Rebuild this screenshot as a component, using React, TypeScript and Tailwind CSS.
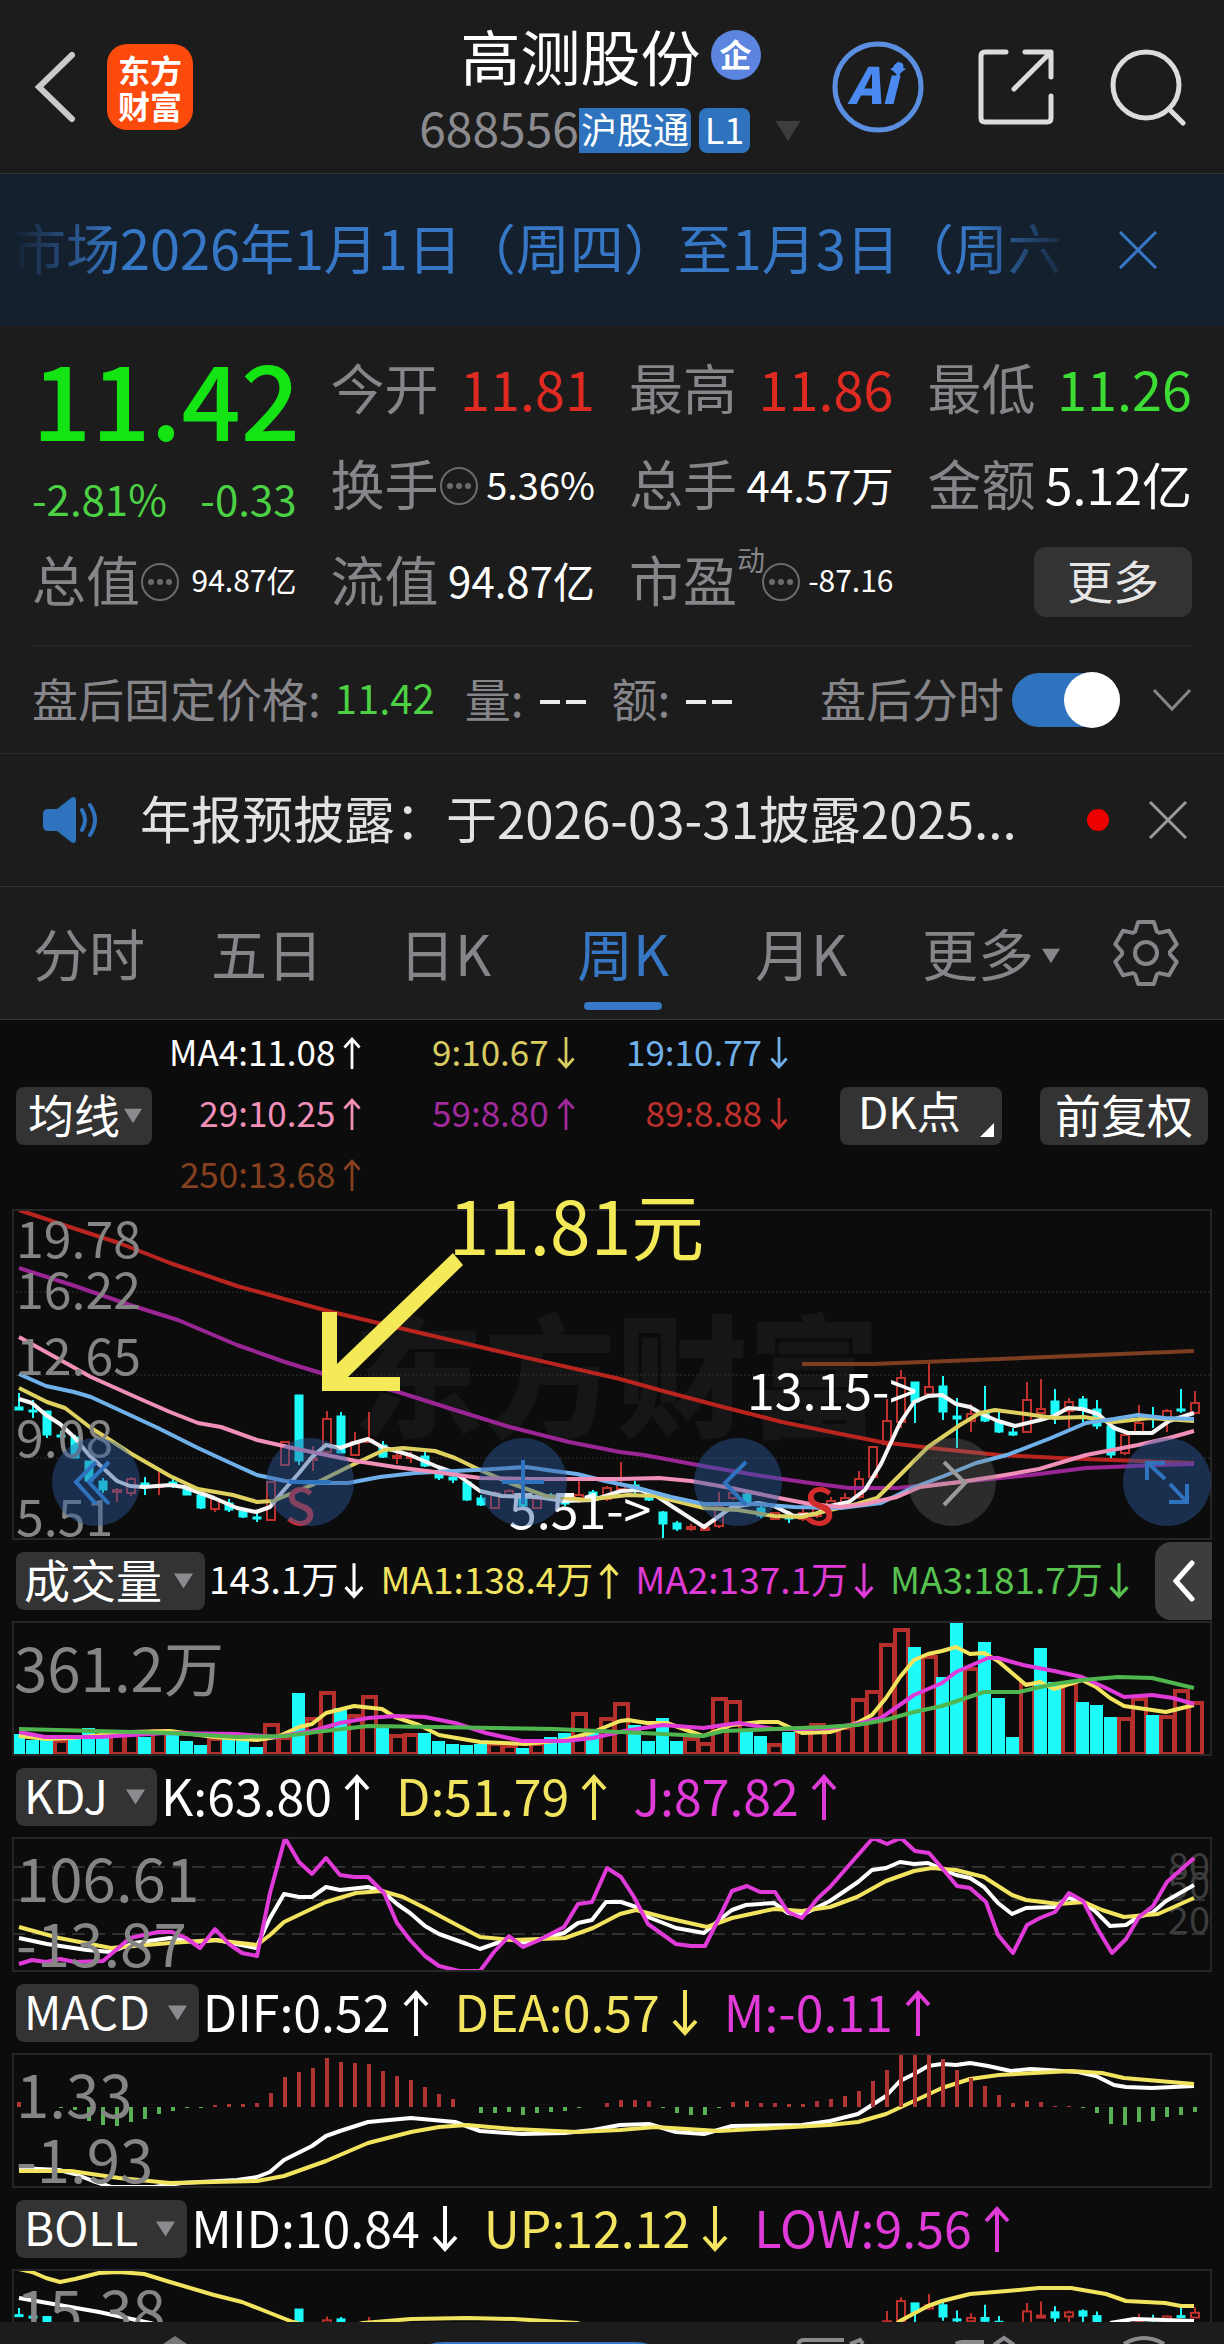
import type { ReactNode } from 'react'

const STEP = 14
const FIRST_X = 7

const CYAN = '#1cfafa'
const RED = '#c0302c'
const YELLOW = '#f3e45f'
const MAGENTA = '#e03bd8'

// up, high, body top, body bottom, low
type Candle = [number, number, number, number, number]

const candles: Candle[] = [
  [0, 184, 198, 201, 201], [0, 191, 201, 203, 209], [0, 202, 202, 226, 229], [0, 222, 226, 228, 229],
  [0, 226, 228, 249, 249], [0, 252, 252, 272, 272], [0, 269, 272, 281, 284], [1, 279, 281, 283, 293],
  [1, 268, 270, 284, 287], [0, 268, 274, 278, 286], [1, 263, 276, 277, 286], [0, 267, 273, 276, 279],
  [0, 278, 278, 286, 286], [0, 286, 286, 299, 300], [1, 288, 290, 300, 303], [0, 290, 294, 301, 303],
  [0, 301, 302, 308, 309], [0, 303, 308, 310, 313], [1, 272, 273, 311, 312], [1, 232, 233, 256, 257],
  [0, 186, 186, 252, 256], [1, 237, 249, 251, 262], [1, 202, 210, 243, 245], [0, 203, 207, 244, 244],
  [1, 223, 233, 246, 247], [1, 203, 231, 232, 234], [0, 232, 236, 248, 249], [1, 243, 247, 249, 255],
  [1, 243, 247, 249, 254], [0, 241, 247, 257, 258], [0, 257, 265, 269, 271], [0, 265, 268, 271, 274],
  [0, 272, 273, 291, 292], [0, 286, 289, 296, 297], [1, 282, 284, 299, 300], [1, 280, 282, 286, 288],
  [0, 281, 285, 297, 299], [1, 288, 290, 299, 300], [0, 284, 286, 290, 292], [0, 284, 291, 295, 297],
  [1, 272, 286, 289, 294], [0, 281, 283, 290, 291], [1, 277, 279, 290, 292], [1, 253, 276, 280, 282],
  [0, 272, 276, 282, 286], [0, 282, 283, 291, 292], [0, 302, 303, 315, 331], [0, 312, 314, 320, 322],
  [1, 315, 318, 319, 322], [1, 318, 319, 321, 322], [1, 283, 298, 317, 319], [1, 281, 284, 289, 291],
  [0, 284, 285, 293, 293], [0, 297, 299, 307, 309], [1, 303, 304, 310, 311], [0, 302, 306, 310, 314],
  [1, 300, 304, 310, 312], [1, 298, 300, 307, 309], [1, 288, 292, 296, 300], [1, 284, 289, 293, 296],
  [1, 262, 270, 288, 290], [1, 237, 238, 268, 269], [1, 190, 212, 235, 238], [1, 161, 169, 213, 219],
  [0, 173, 173, 193, 214], [1, 154, 178, 185, 187], [0, 167, 177, 203, 211], [0, 189, 207, 210, 239],
  [1, 195, 205, 212, 223], [0, 177, 204, 212, 213], [0, 201, 212, 223, 224], [0, 219, 223, 226, 227],
  [1, 173, 191, 223, 224], [1, 170, 200, 204, 205], [0, 180, 192, 205, 215], [1, 189, 193, 202, 219],
  [0, 187, 190, 201, 214], [0, 191, 200, 217, 220], [0, 215, 217, 246, 249], [1, 223, 226, 244, 246],
  [1, 196, 214, 223, 224], [0, 198, 207, 210, 219], [1, 200, 202, 211, 223], [0, 180, 200, 201, 204],
  [1, 182, 194, 204, 205],
]

// bar tops, measured from the top of the pane; a negative sign marks a falling week
const volume = [
  -113, -119, -117, 119, -117, -107, -117, 113, 112, -116, 109, -112, -120, -124, 117, -118, -118, -126, 103, 116,
  -72, 97, 71, -87, 94, 75, -107, 114, 113, -112, -120, -123, -124, -123, 122, 124, -127, 122, -116, -112,
  92, -111, 97, 82, -104, -120, -97, -120, 117, 122, 77, 80, -110, -115, 123, -111, 109, 103, 109, 106,
  78, 70, 23, 8, -26, 35, -56, -1, 47, -21, -77, -116, 62, -27, -61, 62, -81, -84, -96, 97,
  77, -94, 95, 69, 81,
]

const macd = [
  5, 0, 0, -1, -3, -14, -18, -19, -15, -12, -7, -4, -1, -1, 2, 3, 3, 4, 14, 30,
  35, 39, 49, 45, 44, 43, 36, 31, 27, 20, 13, 8, 0, -6, -6, -5, -8, -6, -5, -4,
  -1, 0, 4, 7, 7, 6, -1, -6, -8, -8, -1, 5, 6, 4, 4, 3, 3, 6, 8, 11,
  16, 26, 37, 52, 54, 54, 48, 37, 29, 21, 12, 4, 6, 5, 1, 1, -1, -6, -17, -18,
  -15, -14, -10, -8, -5,
]

const maLines = [
  { color: '#7d3d20', points: '790,155 861,155 987,150 1182,142' },
  { color: '#b9241f', points: '7,1 67,21 107,34 158,54 225,77 316,102 383,118 494,144 608,170 651,182 711,198 770,213 829,225 869,233 928,240 987,246 1047,249 1126,252 1182,254' },
  { color: '#9a2696', points: '7,59 63,77 118,96 166,111 225,136 273,153 312,165 383,182 443,201 498,218 557,233 608,243 632,246 691,257 750,267 798,274 837,279 885,279 948,273 1019,266 1074,259 1146,256 1182,255' },
  { color: '#f5f5f5', points: '7,190 20,194 34,206 48,215 62,228 77,246 105,272 118,277 132,278 158,276 172,278 202,289 225,299 244,303 258,298 272,281 287,264 300,248 314,236 328,239 342,234 356,230 370,238 398,246 426,258 443,264 468,282 490,287 525,288 552,292 581,291 609,282 628,281 643,286 661,298 692,318 720,298 746,294 762,297 782,307 804,305 818,297 837,293 853,281 869,255 888,214 902,193 916,187 930,186 944,195 958,198 972,206 986,212 1003,217 1028,211 1042,207 1056,199 1070,200 1086,205 1102,219 1116,224 1140,224 1157,212 1182,204' },
  { color: '#ded15f', points: '7,179 35,193 53,199 79,219 95,229 118,244 158,267 186,280 221,286 245,293 261,292 300,276 336,258 372,241 391,239 423,242 443,249 468,261 498,274 534,287 573,291 616,286 643,287 692,299 726,301 762,307 790,308 818,301 845,295 865,289 885,269 916,238 948,216 968,204 983,201 1014,205 1042,209 1072,208 1102,213 1138,209 1182,212' },
  { color: '#6fb0ea', points: '7,165 34,177 62,183 79,188 146,219 186,239 225,257 245,266 273,272 304,274 336,274 368,268 403,264 443,262 482,260 514,258 542,262 565,265 593,272 622,278 659,288 692,295 742,295 782,298 829,299 869,294 900,279 932,267 964,254 995,246 1039,229 1074,214 1102,210 1126,206 1153,209 1182,210' },
  { color: '#f08fb8', points: '7,128 43,148 79,168 126,189 158,203 186,214 209,218 245,231 285,240 344,252 383,258 423,263 468,269 522,270 608,270 647,269 679,272 719,279 762,288 798,295 829,298 853,295 885,288 908,278 948,273 987,267 1027,260 1074,246 1126,236 1157,229 1182,222' },
]

const volumeLines = [
  { color: YELLOW, points: '7,115 35,118 60,117 118,111 158,110 202,116 245,119 265,116 287,106 300,103 314,92 342,85 370,88 383,96 407,104 427,114 468,121 514,123 553,119 581,111 608,100 616,99 635,102 655,102 691,115 720,104 748,101 766,101 790,112 818,111 845,102 860,94 874,77 888,56 902,39 916,33 930,30 944,26 958,33 972,32 986,40 1014,64 1028,61 1042,68 1070,59 1084,66 1098,77 1112,85 1140,89 1154,91 1182,84' },
  { color: MAGENTA, points: '7,111 33,116 87,116 154,112 225,113 265,116 300,110 328,102 356,97 383,95 413,96 443,102 474,112 510,120 553,120 581,117 612,110 651,104 691,107 726,102 762,108 790,108 818,107 845,103 869,97 902,74 930,62 944,51 976,37 986,37 1011,44 1042,50 1070,56 1094,67 1112,76 1140,74 1161,77 1182,83' },
  { color: '#4fb64f', points: '7,108 83,110 158,112 225,116 273,115 304,111 356,105 423,106 542,108 608,111 651,113 691,115 711,110 762,108 813,106 845,104 873,99 902,91 930,85 972,71 1007,71 1042,63 1070,59 1106,56 1140,57 1161,62 1182,67' },
]

const kdjLines = [
  { color: '#ffffff', points: '7,101 35,107 75,113 99,115 122,106 158,101 182,105 205,103 244,111 258,81 272,57 287,60 300,60 314,50 328,53 356,50 370,54 385,67 398,76 413,89 427,97 455,107 468,112 496,102 514,106 552,96 566,86 580,83 594,65 609,65 624,70 636,80 664,91 692,96 707,83 720,73 734,68 762,66 776,76 790,78 818,64 846,45 860,33 874,31 888,25 902,27 916,26 944,38 958,41 972,50 986,66 1000,77 1014,71 1042,70 1056,61 1070,64 1084,75 1098,89 1114,88 1126,80 1140,76 1154,64 1182,48' },
  { color: YELLOW, points: '7,90 47,101 99,111 158,106 202,103 245,108 258,98 272,85 314,65 344,56 370,54 391,60 413,71 443,87 468,100 502,103 553,101 581,91 608,77 624,73 655,81 695,90 720,81 762,72 790,74 818,70 845,60 874,44 902,34 920,31 944,33 972,40 1000,58 1014,63 1047,67 1072,65 1090,73 1112,80 1146,77 1182,61' },
  { color: MAGENTA, points: '7,127 20,123 34,125 48,122 63,125 91,124 118,101 146,95 160,95 174,101 188,111 203,92 217,107 230,116 245,119 258,56 273,1 287,25 300,37 314,21 328,38 342,40 356,40 372,56 385,86 398,103 413,119 427,129 447,134 468,134 482,115 497,99 511,110 525,104 552,90 566,67 580,65 595,31 609,40 622,60 636,87 664,107 679,109 693,109 707,81 720,54 735,49 748,55 763,55 776,75 790,81 806,61 818,50 846,18 861,1 875,7 889,1 903,14 917,16 930,31 945,49 958,51 974,65 986,98 1001,116 1015,88 1028,81 1043,75 1057,56 1071,64 1085,91 1100,116 1114,102 1127,80 1141,69 1155,45 1182,21' },
]

const macdLines = [
  { color: '#ffffff', points: '7,115 47,117 63,121 81,128 99,134 142,134 170,130 225,127 245,124 258,119 272,107 300,93 314,83 328,78 356,69 399,65 443,69 468,78 510,81 553,80 581,77 608,72 637,71 664,79 692,81 720,73 790,72 818,68 846,61 874,43 888,28 904,20 916,13 930,11 944,12 958,10 976,13 999,18 1019,16 1066,19 1084,23 1102,32 1114,34 1140,35 1182,33' },
  { color: YELLOW, points: '7,118 59,118 107,125 158,130 245,128 272,123 314,108 356,90 399,79 427,74 455,72 502,76 565,79 608,77 643,74 707,78 762,75 817,72 846,69 874,61 902,48 930,35 958,26 987,22 1059,18 1090,20 1112,25 1182,31' },
]

const bollLines = [
  { color: '#ffffff', points: '7,29 87,43 138,54 200,70' },
  { color: '#ffffff', points: '1098,54 1122,50 1182,52' },
  { color: YELLOW, points: '7,0 20,3 34,9 48,13 63,10 87,4 107,3 132,5 158,13 202,26 230,33 258,44 281,53 316,62 351,54 399,50 455,49 502,50 565,54 700,90 840,90 888,52 916,37 930,32 958,25 995,22 1027,19 1059,19 1094,25 1114,32 1153,34 1169,37 1182,37' },
]

const movingAverages = [
  { text: 'MA4:11.08', up: true, className: 'text-white' },
  { text: '9:10.67', up: false, className: 'text-[#d8cb62]' },
  { text: '19:10.77', up: false, className: 'text-[#6fb0ea]' },
  { text: '29:10.25', up: true, className: 'text-[#f08fb8]' },
  { text: '59:8.80', up: true, className: 'text-[#a02a9c]' },
  { text: '89:8.88', up: false, className: 'text-[#bf2f2b]' },
  { text: '250:13.68', up: true, className: 'text-[#85411f]' },
]

function Lines({ data }: { data: { color: string; points: string }[] }) {
  return (
    <>
      {data.map((line) => (
        <polyline key={line.points} points={line.points} fill="none" stroke={line.color} strokeWidth="4" strokeLinejoin="round" />
      ))}
    </>
  )
}

function Candles({ scale = (y: number) => y }: { scale?: (y: number) => number }) {
  return (
    <>
      {candles.map(([up, high, top, bottom, low], i) => {
        const x = FIRST_X + i * STEP
        const color = up ? RED : CYAN
        const h = Math.max(scale(bottom) - scale(top), 2)
        return (
          <g key={i} stroke={color} strokeWidth="2">
            <line x1={x} x2={x} y1={scale(high)} y2={scale(top)} />
            <line x1={x} x2={x} y1={scale(bottom)} y2={scale(low)} />
            <rect x={x - 4} y={scale(top)} width="8" height={h} fill={up ? 'none' : color} strokeWidth={up ? 2 : 1} />
          </g>
        )
      })}
    </>
  )
}

function Pane({ height, label, children }: { height: number; label: string; children: ReactNode }) {
  return (
    <svg viewBox={`0 0 1200 ${height}`} className="block w-full h-auto" role="img" aria-label={label}>
      {children}
      <rect x="1" y="1" width="1198" height={height - 2} fill="none" stroke="#262626" strokeWidth="2" />
    </svg>
  )
}

function Arrow({ up, className }: { up: boolean; className: string }) {
  return (
    <svg viewBox="0 0 26 46" className={className} fill="none" stroke="currentColor" strokeWidth="4">
      {up ? <path d="M13 46V3M2 15 13 3l11 12" /> : <path d="M13 0v43M2 31l11 12 11-12" />}
    </svg>
  )
}

function Caret({ className }: { className: string }) {
  return (
    <svg viewBox="0 0 20 16" className={className} fill="currentColor">
      <path d="M0 0h20L10 16z" />
    </svg>
  )
}

function Cross({ className }: { className: string }) {
  return (
    <svg viewBox="0 0 38 38" className={className} fill="none" stroke="currentColor" strokeWidth="3">
      <path d="M1 1l36 36M37 1 1 37" />
    </svg>
  )
}

function InfoDots() {
  return (
    <svg viewBox="0 0 40 40" className="w-10 h-10 shrink-0 text-[#6b6b70]" fill="none" stroke="currentColor" strokeWidth="2">
      <circle cx="20" cy="20" r="18" />
      <g fill="currentColor" stroke="none">
        <circle cx="11" cy="20" r="3" />
        <circle cx="20" cy="20" r="3" />
        <circle cx="29" cy="20" r="3" />
      </g>
    </svg>
  )
}

function Gear() {
  const points: string[] = []
  for (let k = 0; k < 6; k++) {
    for (const [offset, r] of [[-27, 24], [-14, 32], [14, 32], [27, 24]]) {
      const a = ((k * 60 + offset - 90) * Math.PI) / 180
      points.push(`${34 + r * Math.cos(a)},${34 + r * Math.sin(a)}`)
    }
  }
  return (
    <svg viewBox="0 0 68 68" className="w-[68px] h-[68px]" fill="none" stroke="currentColor" strokeWidth="4" strokeLinejoin="round">
      <polygon points={points.join(' ')} />
      <circle cx="34" cy="34" r="11" />
    </svg>
  )
}

function Header() {
  return (
    <header className="flex items-center pl-[34px] pr-[38px] pt-[21px] pb-5 border-b border-[#2f3234]">
      <button aria-label="返回" className="text-[#c9c9c9]">
        <svg viewBox="0 0 42 72" className="w-[42px] h-[72px]" fill="none" stroke="currentColor" strokeWidth="6" strokeLinecap="round">
          <path d="M38 4 5 36l33 32" />
        </svg>
      </button>
      <div className="ml-[31px] w-[86px] h-[86px] rounded-[20px] bg-[#fc4a0c] text-white font-bold text-[32px] leading-[36px] flex flex-col items-center justify-center">
        <span>东方</span>
        <span>财富</span>
      </div>
      <div className="flex-1 flex justify-end pr-[30px] mt-1">
        <div className="flex flex-col items-center gap-[23px]">
          <div className="flex items-center gap-[10px]">
            <h1 className="text-[60px] leading-[60px] text-white">高测股份</h1>
            <span className="w-[50px] h-[50px] rounded-full bg-[#5c85e0] text-white font-bold text-[32px] leading-[46px] text-center">企</span>
          </div>
          <div className="flex items-center text-white">
            <span className="text-[48px] leading-[37px] pb-2 text-[#8b8b8f]">688556</span>
            <span className="h-[45px] px-0.5 rounded-r-lg bg-[#2f72bd] text-[36px] leading-[41px]">沪股通</span>
            <span className="ml-2 h-[45px] w-[51px] rounded-lg bg-[#2f72bd] text-[36px] leading-[41px] text-center">L1</span>
            <Caret className="ml-6 w-7 h-5 text-[#3d3d3d]" />
          </div>
        </div>
      </div>
      <button aria-label="AI" className="text-[#4a8af0]">
        <svg viewBox="0 0 92 92" className="w-[92px] h-[92px]">
          <circle cx="46" cy="46" r="43" fill="none" stroke="#5a8ee0" strokeWidth="5" />
          <text x="16" y="63" fontSize="50" fontWeight="900" fontStyle="italic" fill="currentColor">Ai</text>
          <path d="M66 20q2 6 8 8-6 3-8 9-2-6-8-9 6-2 8-8z" fill="currentColor" />
        </svg>
      </button>
      <button aria-label="分享" className="ml-[54px] text-[#dcdcdc]">
        <svg viewBox="0 0 76 76" className="w-[76px] h-[76px]" fill="none" stroke="currentColor" strokeWidth="5" strokeLinecap="round" strokeLinejoin="round">
          <path d="M28 3H7q-4 0-4 4v62q0 4 4 4h62q4 0 4-4V47M47 3h26v25M70 6 36 40" />
        </svg>
      </button>
      <button aria-label="搜索" className="ml-[56px] text-[#dcdcdc]">
        <svg viewBox="0 0 76 78" className="w-[76px] h-[78px]" fill="none" stroke="currentColor" strokeWidth="5" strokeLinecap="round">
          <circle cx="36" cy="37" r="33" />
          <path d="M59 61l14 14" />
        </svg>
      </button>
    </header>
  )
}

function Banner() {
  return (
    <div className="flex items-center h-[152px] bg-[#15202f] text-[#3678c6]">
      <p className="ml-3 flex-1 min-w-0 overflow-hidden whitespace-nowrap text-[54px] leading-[80px] pb-1.5 [mask-image:linear-gradient(to_right,transparent,black_10%,black_90%,transparent)]">
        市场2026年1月1日（周四）至1月3日（周六
      </p>
      <button aria-label="关闭公告" className="ml-[44px] mr-[67px]">
        <Cross className="w-[38px] h-[38px]" />
      </button>
    </div>
  )
}

function Stat({ label, value, valueClass, info, sup }: { label: string; value: string; valueClass: string; info?: boolean; sup?: string }) {
  return (
    <dl className="flex items-center h-24 whitespace-nowrap">
      <dt className="flex items-center text-[54px] leading-[72px] pb-1.5 text-[#85858a]">
        {label}
        {sup && <span className="self-start -mr-1 text-[28px] leading-8">{sup}</span>}
      </dt>
      {info && <InfoDots />}
      <dd className={`ml-auto pb-1.5 ${valueClass}`}>{value}</dd>
    </dl>
  )
}

function Quote() {
  return (
    <section className="grid grid-cols-4 gap-x-[34px] px-8 pt-4 pb-[15px] text-white">
      <div className="row-span-2">
        <p className="text-[104px] leading-[108px] font-medium text-[#14e414]">11.42</p>
        <p className="mt-5 flex justify-between text-[42px] leading-[56px] text-[#4bd143] whitespace-nowrap">
          <span>-2.81%</span>
          <span>-0.33</span>
        </p>
      </div>
      <Stat label="今开" value="11.81" valueClass="text-[54px] text-[#df2a22]" />
      <Stat label="最高" value="11.86" valueClass="text-[54px] text-[#df2a22]" />
      <Stat label="最低" value="11.26" valueClass="text-[54px] text-[#3ddc34]" />
      <Stat label="换手" value="5.36%" valueClass="text-[38px]" info />
      <Stat label="总手" value="44.57万" valueClass="text-[42px]" />
      <Stat label="金额" value="5.12亿" valueClass="text-[50px]" />
      <Stat label="总值" value="94.87亿" valueClass="text-[30px]" info />
      <Stat label="流值" value="94.87亿" valueClass="text-[42px]" />
      <Stat label="市盈" sup="动" value="-87.16" valueClass="text-[30px]" info />
      <div className="flex items-center justify-end">
        <button className="w-[158px] h-[70px] pb-1.5 rounded-xl bg-[#333333] text-[#e6e6e6] text-[46px] leading-[64px]">更多</button>
      </div>
    </section>
  )
}

function Dashes() {
  return (
    <span className="ml-4 mt-1 flex gap-1.5" role="img" aria-label="无">
      <i className="w-5 h-1 bg-[#ececec]" />
      <i className="w-5 h-1 bg-[#ececec]" />
    </span>
  )
}

function AfterHours() {
  return (
    <div className="border-b border-[#2a2a2a]">
      <div className="mx-8 flex items-center h-[108px] border-t border-[#262626] text-[46px] leading-[60px] text-[#85858a] whitespace-nowrap">
        <span className="pb-1.5">盘后固定价格:</span>
        <span className="ml-3.5 pb-1.5 text-[40px] text-[#4bd143]">11.42</span>
        <span className="ml-[30px] pb-1.5">量:</span>
        <Dashes />
        <span className="ml-[26px] pb-1.5">额:</span>
        <Dashes />
        <label htmlFor="after-hours" className="ml-auto pb-1.5">盘后分时</label>
        <input
          id="after-hours"
          type="checkbox"
          defaultChecked
          className="ml-2 shrink-0 appearance-none flex justify-end items-center w-[108px] h-[54px] rounded-full bg-[#2f72bd] before:w-[56px] before:h-[56px] before:rounded-full before:bg-white"
        />
        <button aria-label="展开" className="ml-8">
          <svg viewBox="0 0 40 24" className="w-10 h-6" fill="none" stroke="currentColor" strokeWidth="3">
            <path d="M2 2l18 19L38 2" />
          </svg>
        </button>
      </div>
    </div>
  )
}

function Notice() {
  return (
    <div className="flex items-center h-[133px] pl-[42px] pr-[37px] border-b border-[#333333]">
      <svg viewBox="0 0 58 48" className="w-[58px] h-12 shrink-0 text-[#2f72bd]">
        <path d="M6 13h9L29 2q5-3 5 3v38q0 6-5 3L15 35H6q-5 0-5-5V18q0-5 5-5z" fill="currentColor" />
        <path d="M40 14q6 10 0 20M48 9q10 15 0 30" fill="none" stroke="currentColor" strokeWidth="4" strokeLinecap="round" />
      </svg>
      <a href="#notice" className="ml-10 pb-1.5 text-[51px] leading-[68px] text-[#e2e2e2] whitespace-nowrap">
        年报预披露：于2026-03-31披露2025...
      </a>
      <span className="ml-auto w-[22px] h-[22px] rounded-full bg-[#ee0000]" />
      <button aria-label="关闭" className="ml-10 text-[#9a9a9a]">
        <Cross className="w-[38px] h-[38px]" />
      </button>
    </div>
  )
}

function Tabs() {
  return (
    <nav className="flex h-[133px] text-[56px] leading-[76px] text-[#85858a] border-b border-[#333333] whitespace-nowrap">
      <div className="flex-1 grid grid-cols-6">
        {['分时', '五日', '日K', '周K', '月K'].map((tab) => (
          <button key={tab} className={tab === '周K' ? 'flex flex-col items-center pt-[27px] text-[#3678c6]' : 'flex flex-col items-center pt-[27px]'}>
            {tab}
            {tab === '周K' && <span className="mt-3 w-[78px] h-2 rounded-full bg-[#3678c6]" />}
          </button>
        ))}
        <button className="flex justify-center pt-[27px] pl-6">
          更多
          <Caret className="mt-[34px] ml-2 w-[18px] h-4 shrink-0" />
        </button>
      </div>
      <button aria-label="设置" className="w-[156px] flex items-center justify-center">
        <Gear />
      </button>
    </nav>
  )
}

function AverageLegend() {
  return (
    <div className="flex items-center pl-4 pr-4 pb-1.5">
      <button className="mt-2 flex items-center w-[136px] h-[58px] pl-3 rounded-lg bg-[#333333] text-white text-[46px] leading-[52px] whitespace-nowrap">
        <span className="pb-1.5">均线</span>
        <Caret className="ml-1 w-[18px] h-4 text-[#8b8b8f]" />
      </button>
      <ul className="-ml-1 grid grid-cols-3 w-[640px] text-[35px] leading-[61px]">
        {movingAverages.map((ma) => (
          <li key={ma.text} className={`flex items-center justify-end gap-2 ${ma.className}`}>
            {ma.text}
            <Arrow up={ma.up} className="mt-1 w-[18px] h-8" />
          </li>
        ))}
      </ul>
      <button className="mt-2 ml-auto flex items-end justify-between w-[162px] h-[58px] pl-[18px] pr-2 pb-2 rounded-lg bg-[#333333] text-white text-[44px] leading-[54px]">
        DK点
        <svg viewBox="0 0 14 14" className="w-3.5 h-3.5" fill="currentColor">
          <path d="M14 0v14H0z" />
        </svg>
      </button>
      <button className="mt-2 ml-[38px] w-[168px] h-[58px] pb-1.5 rounded-lg bg-[#333333] text-white text-[46px] leading-[52px]">前复权</button>
    </div>
  )
}

const chartButtons = [
  { name: '最左', place: 'left-[3.3%] bg-[#2c5a9f]/45', path: 'M44 24 24 44l20 22M57 24 37 44l20 22' },
  { name: '缩小', place: 'left-[21.2%] bg-[#2c5a9f]/45', path: 'M23 44h42' },
  { name: '放大', place: 'left-[38.9%] bg-[#2c5a9f]/45', path: 'M23 44h42M44 22v44' },
  { name: '左移', place: 'left-[56.8%] bg-[#2c5a9f]/45', path: 'M52 24 31 45l21 22' },
  { name: '右移', place: 'left-[74.7%] bg-[#777777]/30', path: 'M36 24l21 21-21 22' },
  { name: '全屏', place: 'left-[92.6%] bg-[#2c5a9f]/45', path: 'M24 42V25h18M26 26l16 15M64 46v18H46M47 46l16 17' },
]

function PriceChart() {
  return (
    <div className="relative mx-3">
      <Pane height={331} label="周K线图">
        <text x="340" y="218" fontSize="132" fontWeight="900" fill="#161616">东方财富</text>
        {[83, 166, 249].map((y) => (
          <line key={y} x1="0" x2="1200" y1={y} y2={y} stroke="#303030" strokeWidth="1" strokeDasharray="2 2" />
        ))}
        <Candles />
        <Lines data={maLines} />
        <g fontSize="50" fill="#858585">
          <text x="4" y="49">19.78</text>
          <text x="4" y="100">16.22</text>
          <text x="4" y="166">12.65</text>
          <text x="4" y="248">9.08</text>
          <text x="4" y="327">5.51</text>
        </g>
        <g fontSize="50" fill="#ffffff">
          <text x="735" y="201">13.15-&gt;</text>
          <text x="497" y="320">5.51-&gt;</text>
        </g>
        <g fontSize="50" fontWeight="500" fill="#d22c2c">
          <text x="273" y="316">S</text>
          <text x="792" y="316">S</text>
        </g>
        <g fill="#f4ea57">
          <path d="M441 44l10 12-115 112h52v14h-78v-79h15v52z" />
        </g>
      </Pane>
      {/* hand-written price note, sits across the pane's top edge */}
      <p className="absolute left-[36.4%] -top-[36px] text-[73px] leading-[100px] text-[#f4ea57] whitespace-nowrap">11.81元</p>
      {chartButtons.map((b) => (
        <button key={b.name} aria-label={b.name} className={`absolute bottom-[14px] w-[88px] h-[88px] rounded-full ${b.place}`}>
          <svg viewBox="0 0 88 88" fill="none" stroke={b.name === '右移' ? '#9a9a9a' : '#2f72bd'} strokeWidth="4">
            <path d={b.path} />
          </svg>
        </button>
      ))}
    </div>
  )
}

type Reading = { text: string; up: boolean; className: string }

function IndicatorBar({ name, readings, compact, children }: { name: string; readings: Reading[]; compact?: boolean; children?: ReactNode }) {
  return (
    <div className="flex items-center gap-1 h-[81px] pl-4 pr-3 whitespace-nowrap">
      <button className={`flex items-center h-[58px] pl-2 pr-3 rounded-lg bg-[#333333] text-white text-[46px] leading-[52px] ${compact ? 'gap-3' : 'gap-[18px]'}`}>
        <span className="pb-1.5">{name}</span>
        <Caret className="w-[19px] h-4 text-[#8b8b8f]" />
      </button>
      <div className={compact ? 'flex gap-4 text-[37px] leading-[60px]' : 'flex gap-[26px] text-[50px] leading-[60px]'}>
        {readings.map((r) => (
          <span key={r.text} className={`flex items-center ${compact ? 'gap-1.5' : 'gap-3'} ${r.className}`}>
            <span className="pb-1.5">{r.text}</span>
            <Arrow up={r.up} className={compact ? 'w-5 h-[46px]' : 'w-[26px] h-[46px]'} />
          </span>
        ))}
      </div>
      {children}
    </div>
  )
}

function VolumeChart() {
  return (
    <div className="mx-3">
      <Pane height={135} label="成交量">
        {volume.map((v, i) => {
          const top = Math.abs(v)
          const x = FIRST_X + i * STEP
          return v < 0 ? (
            <rect key={i} x={x - 7} y={top} width="13" height={134 - top} fill={CYAN} />
          ) : (
            <rect key={i} x={x - 6} y={top + 1} width="13" height={132 - top} fill="none" stroke="#b5302c" strokeWidth="4" />
          )
        })}
        <Lines data={volumeLines} />
        <text x="2" y="71" fontSize="60" fill="#858585">361.2万</text>
      </Pane>
    </div>
  )
}

function KdjChart() {
  return (
    <div className="mx-3">
      <Pane height={135} label="KDJ">
        {[30, 63, 97].map((y) => (
          <line key={y} x1="0" x2="1200" y1={y} y2={y} stroke="#303030" strokeWidth="2" strokeDasharray="13 7" />
        ))}
        <g fontSize="38" fill="#3c3c3c" textAnchor="end">
          <text x="1198" y="43">80</text>
          <text x="1198" y="62">50</text>
          <text x="1198" y="97">20</text>
        </g>
        <Lines data={kdjLines} />
        <g fontSize="60" fill="#858585">
          <text x="4" y="65">106.61</text>
          <text x="4" y="130">-13.87</text>
        </g>
      </Pane>
    </div>
  )
}

function MacdChart() {
  return (
    <div className="mx-3">
      <Pane height={135} label="MACD">
        <Lines data={macdLines} />
        {macd.map((v, i) => (
          <rect key={i} x={FIRST_X - 2 + i * STEP} y={v > 0 ? 54 - v : 54} width="4" height={Math.abs(v)} fill={v > 0 ? '#b03431' : '#57b257'} />
        ))}
        <g fontSize="60" fill="#858585">
          <text x="4" y="65">1.33</text>
          <text x="4" y="130">-1.93</text>
        </g>
      </Pane>
    </div>
  )
}

function BollChart() {
  return (
    <div className="mx-3">
      <Pane height={135} label="BOLL">
        <Candles scale={(y) => 25 + (y - 154) * 0.47} />
        <Lines data={bollLines} />
        <text x="4" y="65" fontSize="60" fill="#858585">15.38</text>
      </Pane>
    </div>
  )
}

function BottomBar() {
  return (
    <footer className="shrink-0 h-[22px] overflow-hidden bg-[#1c1c1c]">
      <svg viewBox="0 0 1224 22" className="block w-full h-auto" fill="none" stroke="#8b8b8f" strokeWidth="4">
        <path d="M160 24l15-10 15 10z" fill="#77777a" stroke="none" />
        <path d="M430 22q6-2 14-2h190q8 0 14 2z" fill="#3678c6" stroke="none" />
        <path d="M798 22q2-4 6-4h40M850 22l10-4 3 4M956 22q2-2 6-2h22M994 23l10-7 10 7M1124 22q20-12 40 0" />
      </svg>
    </footer>
  )
}

export default function App() {
  return (
    <div className="h-screen flex flex-col overflow-hidden bg-[#0c0c0c] font-['Noto_Sans_CJK_SC',sans-serif]">
      <main className="flex-1 min-h-0 overflow-hidden">
        <div className="bg-[#1c1c1c]">
          <Header />
          <Banner />
          <Quote />
          <AfterHours />
          <Notice />
          <Tabs />
        </div>
        <AverageLegend />
        <PriceChart />
        <IndicatorBar
          name="成交量"
          compact
          readings={[
            { text: '143.1万', up: false, className: 'text-white' },
            { text: 'MA1:138.4万', up: true, className: 'text-[#f3e45f]' },
            { text: 'MA2:137.1万', up: false, className: 'text-[#e03bd8]' },
            { text: 'MA3:181.7万', up: false, className: 'text-[#57c24f]' },
          ]}
        >
          <button aria-label="收起" className="ml-auto w-[57px] h-[78px] flex items-center justify-center rounded-l-2xl bg-[#3d3d3d] text-white">
            <svg viewBox="0 0 22 42" className="w-[22px] h-[42px]" fill="none" stroke="currentColor" strokeWidth="5" strokeLinecap="round">
              <path d="M19 3 3 21l16 18" />
            </svg>
          </button>
        </IndicatorBar>
        <VolumeChart />
        <IndicatorBar
          name="KDJ"
          readings={[
            { text: 'K:63.80', up: true, className: 'text-white' },
            { text: 'D:51.79', up: true, className: 'text-[#f3e45f]' },
            { text: 'J:87.82', up: true, className: 'text-[#e03bd8]' },
          ]}
        />
        <KdjChart />
        <IndicatorBar
          name="MACD"
          readings={[
            { text: 'DIF:0.52', up: true, className: 'text-white' },
            { text: 'DEA:0.57', up: false, className: 'text-[#f3e45f]' },
            { text: 'M:-0.11', up: true, className: 'text-[#e03bd8]' },
          ]}
        />
        <MacdChart />
        <IndicatorBar
          name="BOLL"
          readings={[
            { text: 'MID:10.84', up: false, className: 'text-white' },
            { text: 'UP:12.12', up: false, className: 'text-[#f3e45f]' },
            { text: 'LOW:9.56', up: true, className: 'text-[#e03bd8]' },
          ]}
        />
        <BollChart />
      </main>
      <BottomBar />
    </div>
  )
}
